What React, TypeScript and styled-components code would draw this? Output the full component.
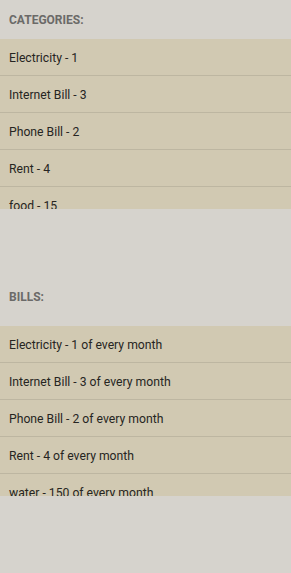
import styled, { createGlobalStyle } from "styled-components";

const GlobalStyle = createGlobalStyle`
  html, body {
    margin: 0;
    padding: 0;
    background: #d6d3cd;
    font-family: Roboto, "Liberation Sans", sans-serif;
  }
`

const Page = styled.div`
  width: 291px;
  min-height: 573px;
  background: #d6d3cd;
  display: flex;
  flex-direction: column;
`

const Section = styled.section<{ $top: number }>`
  display: flex;
  flex-direction: column;
  margin-top: ${(p) => p.$top}px;
`

const Header = styled.h2<{ $bottom: number }>`
  margin: 0;
  padding: 13px 9px ${(p) => p.$bottom}px;
  font-size: 12px;
  line-height: 14px;
  font-weight: 700;
  color: #6b6a68;
`

const List = styled.ul`
  list-style: none;
  margin: 0;
  padding: 0;
  height: 170px;
  overflow: hidden;
  background: #d1c9b2;
`

const Row = styled.li`
  height: 36px;
  display: flex;
  align-items: center;
  padding: 1px 9px 0;
  box-sizing: border-box;
  font-size: 12.2px;
  color: #262522;
  border-bottom: 1px solid #bdb6a1;
  height: 37px;
`

const categories = [
  { name: 'Electricity', day: 1 },
  { name: 'Internet Bill', day: 3 },
  { name: 'Phone Bill', day: 2 },
  { name: 'Rent', day: 4 },
  { name: 'food', day: 15 },
]

const bills = [
  { name: 'Electricity', day: 1 },
  { name: 'Internet Bill', day: 3 },
  { name: 'Phone Bill', day: 2 },
  { name: 'Rent', day: 4 },
  { name: 'water', day: 150 },
]

export default function App() {
  return (
    <>
      <GlobalStyle />
      <Page>
        <Section $top={0}>
          <Header $bottom={12}>CATEGORIES:</Header>
          <List>
            {categories.map((c) => (
              <Row key={c.name}>{c.name} - {c.day}</Row>
            ))}
          </List>
        </Section>
        <Section $top={68}>
          <Header $bottom={22}>BILLS:</Header>
          <List>
            {bills.map((b) => (
              <Row key={b.name}>{b.name} - {b.day} of every month</Row>
            ))}
          </List>
        </Section>
      </Page>
    </>
  );
}
